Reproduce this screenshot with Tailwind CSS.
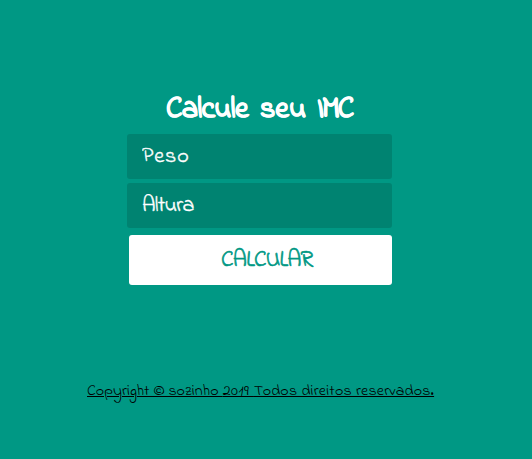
<!DOCTYPE html>
<html lang="pt-BR">
<head>
<meta charset="utf-8">
<title>Calcule seu IMC</title>
<script src="https://cdn.jsdelivr.net/npm/@tailwindcss/browser@4"></script>
</head>
<body class="h-[459px] overflow-hidden bg-[#009884] font-['Indie_Flower',Lato,sans-serif]">
<main class="flex flex-col pt-[90px] pl-[127px]">
  <h1 class="ml-[39px] flex h-[44px] whitespace-nowrap text-[30px] leading-[40px] font-bold text-white [-webkit-text-stroke:0.6px_white]"><span class="w-[94px] tracking-[-0.7px]">Calcule </span><span class="w-[57px] tracking-[0.1px]">seu </span><span class="tracking-[-2.2px]">IMC</span></h1>
  <form class="flex w-[265px] flex-col">
    <input placeholder="Peso" class="h-[45px] rounded-[3px] bg-[#008371] px-[15px] text-[22px] tracking-[0.9px] text-white placeholder:text-white [-webkit-text-stroke:0.4px_white]">
    <input placeholder="Altura" class="mt-1 h-[45px] rounded-[3px] bg-[#008371] px-[15px] text-[22px] tracking-[-0.7px] text-white placeholder:text-white [-webkit-text-stroke:0.4px_white]">
    <button type="button" class="mt-[7px] ml-[2px] h-[50px] rounded-[3px] bg-white pt-[2px] pl-[92px] text-left text-[23px] tracking-[-0.8px] text-[#009884] [-webkit-text-stroke:0.6px_#009884]">CALCULAR</button>
  </form>
</main>
<footer class="mt-[95px] pl-[87px] text-[16px] leading-[22px] tracking-[0.2px] whitespace-nowrap text-black">
  <a class="underline decoration-1 underline-offset-[1px]"><span class="tracking-[0.05px]">Copyright © sozinho </span><span class="tracking-[0.5px]">2019 </span>Todos direitos reservados.</a>
</footer>
</body>
</html>
